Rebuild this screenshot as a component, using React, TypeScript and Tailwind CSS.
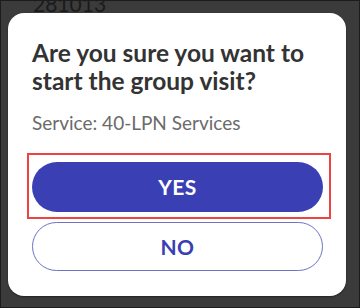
import React from "react";

export default function App() {
  return (
    <div
      className="relative w-[360px] h-[308px] overflow-hidden bg-[#3b3b3b] border border-[#1c1c1c]"
      style={{ fontFamily: "Lato, 'Noto Sans', sans-serif" }}
    >
      <div className="absolute left-[32px] top-[-7px] text-[21px] leading-[20px] text-[#1a1a1a] font-normal">
        281013
      </div>
      <div className="absolute left-[7px] top-[12px] w-[338px] h-[283px] rounded-[16px] bg-white shadow-[0_1px_2px_rgba(0,0,0,0.4)] pl-6 pr-[23px] pt-[26px] flex flex-col">
        <h1 className="text-[24.5px] leading-[28px] font-bold text-[#333333]">
          Are you sure you want to start the group visit?
        </h1>
        <p className="mt-4 text-[19px] leading-[24px] text-[#6b6b6b]">Service: 40-LPN Services</p>
        <button className="mt-[27px] h-[50px] w-full rounded-full bg-[#3a40b4] text-white text-[21px] font-bold tracking-[0.5px]">
          YES
        </button>
        <button className="mt-[10px] h-[49px] w-full rounded-full border border-[#6d72c8] bg-white text-[#3a40b4] text-[21px] font-bold tracking-[0.5px]">
          NO
        </button>
      </div>
      <div className="absolute left-[26px] top-[152px] w-[304px] h-[66px] border-2 border-[#ec4343] pointer-events-none" />
    </div>
  );
}
